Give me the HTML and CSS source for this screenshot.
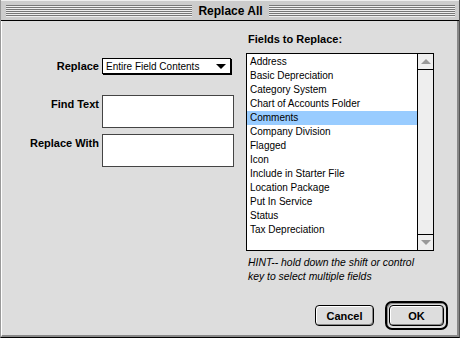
FILE: index.html
```html
<!DOCTYPE html>
<html lang="en">
<head>
  <meta charset="UTF-8" />
  <title>Replace All</title>
  <link rel="stylesheet" href="styles.css">
</head>
<body>
  <div class="window">
    <div class="titlebar">
      <div class="stripes"></div>
      <div class="title">Replace All</div>
      <div class="stripes"></div>
    </div>
    <div class="content">
      <div class="main">
        <div class="left">
          <div class="row row-popup">
            <label class="label">Replace</label>
            <div class="popup">
              <span>Entire Field Contents</span>
              <span class="arrow"></span>
            </div>
          </div>
          <div class="row row-find">
            <label class="label">Find Text</label>
            <div class="textbox"></div>
          </div>
          <div class="row row-with">
            <label class="label">Replace With</label>
            <div class="textbox"></div>
          </div>
        </div>
        <div class="right">
          <div class="list-title">Fields to Replace:</div>
          <div class="listbox">
            <ul class="items">
              <li>Address</li>
              <li>Basic Depreciation</li>
              <li>Category System</li>
              <li>Chart of Accounts Folder</li>
              <li class="selected">Comments</li>
              <li>Company Division</li>
              <li>Flagged</li>
              <li>Icon</li>
              <li>Include in Starter File</li>
              <li>Location Package</li>
              <li>Put In Service</li>
              <li>Status</li>
              <li>Tax Depreciation</li>
            </ul>
            <div class="scrollbar">
              <div class="scroll-btn"><span class="tri-up"></span></div>
              <div class="track"></div>
              <div class="scroll-btn"><span class="tri-down"></span></div>
            </div>
          </div>
          <p class="hint">HINT-- hold down the shift or control<br>key to select multiple fields</p>
        </div>
      </div>
      <div class="footer">
        <button class="btn">Cancel</button>
        <div class="default-ring"><button class="btn btn-ok">OK</button></div>
      </div>
    </div>
  </div>
</body>
</html>
```

FILE: styles.css
```css
html, body {
  margin: 0;
  padding: 0;
  background: #ddd;
}
.window {
  width: 460px;
  height: 338px;
  box-sizing: border-box;
  display: flex;
  flex-direction: column;
  font-family: 'Liberation Sans', Arial, sans-serif;
  color: #000;
  border-left: 1px solid #999;
  border-right: 1px solid #555;
  border-bottom: 1px solid #000;
}
.titlebar {
  height: 21px;
  box-sizing: border-box;
  display: flex;
  align-items: center;
  gap: 4px;
  padding: 0 4px 0 5px;
  background: #ccc;
  border-top: 1px solid #eee;
  border-bottom: 1px solid #000;
}
.stripes {
  flex: 1;
  height: 12px;
  background: repeating-linear-gradient(to bottom, #777 0, #777 1px, #eee 1px, #eee 2px);
}
.title {
  font-weight: bold;
  font-size: 12px;
  padding: 0 2px;
}
.content {
  flex: 1;
  display: flex;
  flex-direction: column;
  background: #ddd;
  border-left: 1px solid #fff;
  border-right: 2px solid #888;
  border-bottom: 2px solid #888;
  padding: 0 9px 5px 0;
}
.main {
  display: flex;
}
.left {
  width: 244px;
  padding-top: 37px;
}
.row {
  display: flex;
  align-items: flex-start;
  gap: 3px;
}
.label {
  width: 97px;
  text-align: right;
  font-weight: bold;
  font-size: 11px;
  padding-top: 3px;
}
.row-find {
  margin-top: 21px;
}
.row-with {
  margin-top: 6px;
}
.popup {
  width: 129px;
  height: 16px;
  box-sizing: border-box;
  display: flex;
  align-items: center;
  justify-content: space-between;
  padding: 0 4px 0 3px;
  background: #fff;
  border: 1px solid #000;
  box-shadow: 1px 1px 0 #000;
  font-size: 10px;
}
.row-popup .label {
  padding-top: 2px;
}
.arrow {
  width: 0;
  height: 0;
  border-left: 5px solid transparent;
  border-right: 5px solid transparent;
  border-top: 5px solid #000;
}
.textbox {
  width: 132px;
  height: 33px;
  box-sizing: border-box;
  background: #fff;
  border: 1px solid #444;
}
.right {
  width: 188px;
  padding-top: 12px;
}
.list-title {
  font-weight: bold;
  font-size: 11px;
  height: 14px;
  padding-left: 2px;
}
.listbox {
  margin-top: 6px;
  height: 198px;
  box-sizing: border-box;
  display: flex;
  background: #fff;
  border: 1px solid #000;
}
.items {
  flex: 1;
  list-style: none;
  margin: 0;
  padding: 1px 0 0;
  font-size: 10px;
}
.items li {
  height: 14px;
  line-height: 14px;
  padding-left: 3px;
}
.items li.selected {
  background: #9cf;
}
.scrollbar {
  width: 15px;
  display: flex;
  flex-direction: column;
  border-left: 1px solid #000;
  background: #eee;
}
.track {
  flex: 1;
}
.scroll-btn {
  height: 15px;
  display: flex;
  align-items: center;
  justify-content: center;
  border-bottom: 1px solid #000;
}
.scroll-btn:last-child {
  border-bottom: none;
  border-top: 1px solid #000;
}
.tri-up {
  border-left: 5px solid transparent;
  border-right: 5px solid transparent;
  border-bottom: 5px solid #999;
}
.tri-down {
  border-left: 5px solid transparent;
  border-right: 5px solid transparent;
  border-top: 5px solid #999;
}
.hint {
  margin: 5px 0 0 2px;
  font-style: italic;
  font-size: 10.4px;
  line-height: 14px;
}
.footer {
  margin-top: auto;
  display: flex;
  align-items: center;
  justify-content: flex-end;
  gap: 11px;
}
.btn {
  font-family: 'Liberation Sans', Arial, sans-serif;
  font-weight: bold;
  font-size: 11px;
  width: 59px;
  height: 21px;
  padding: 0;
  background: #ddd;
  border: 1px solid #000;
  border-radius: 4px;
  box-shadow: inset 1px 1px 0 #fff, inset -1px -1px 0 #888;
  color: #000;
}
.default-ring {
  padding: 2px;
  border: 2px solid #000;
  border-radius: 7px;
  box-shadow: inset 1px 1px 0 #888;
}
.btn-ok {
  width: 55px;
  display: block;
}
```
